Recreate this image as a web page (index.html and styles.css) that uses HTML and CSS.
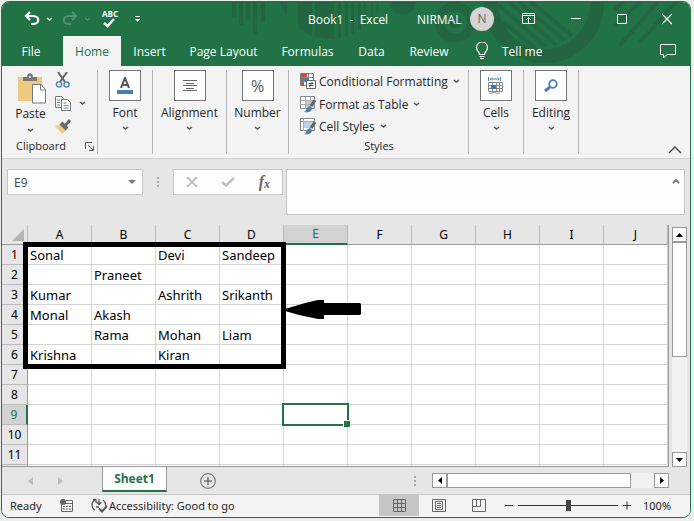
FILE: index.html
```html
<!DOCTYPE html>
<html lang="en">
<head>
<meta charset="utf-8">
<title>Book1 - Excel</title>
<link rel="stylesheet" href="styles.css">
</head>
<body>
<div class="window">
  <header class="top">
    <svg class="pattern" width="689" height="64" viewBox="2 2 689 64" aria-hidden="true">
      <g fill="#236541">
        <path d="M232 2h4v16h-4zM239 2h4v23h-4zM246 2h4v18h-4zM253 2h4v32h-4zM261 2h4v20h-4zM280 2h7v14q-5-7-7-14zM298 2h14v34q-9-4-14-10zM315 2h19v37q-11 0-19-3zM338 2h3v36h-3zM345 2h3v34h-3zM351 2h3v32h-3zM358 2h3v28h-3zM364 2h2v25h-2zM371 2h2v19h-2zM377 2h1v10h-1zM389 2h27q-2 12-13.500 12T389 2z"/>
        <circle cx="455" cy="22" r="6"/>
      </g>
      <g fill="none" stroke="#236541">
        <circle cx="455" cy="22" r="16" stroke-width="9"/>
        <circle cx="544" cy="3" r="53" stroke-width="14"/>
        <path stroke-width="4" d="M503 22l32 26M499 5l47 42M509 2l47 43M519 2l45 38M531 2l41 34M624 2l-10 8M640 2l-25 24M658 2l-38 43M676 2l-36 40"/>
      </g>
    </svg>
    <div class="titlebar">
      <div class="quick">
        <button class="flat undo" aria-label="Undo"><svg width="16" height="16" viewBox="0 0 16 16" fill="none" stroke="#fff" stroke-width="2.200"><path d="M6 1L2 5l4 4M2 5h7c7 0 7 8 0 8H7"/></svg></button>
        <button class="flat mini" aria-label="Undo list"><svg width="7" height="5" viewBox="0 0 7 5" fill="none" stroke="#d5e6dc" stroke-width="1.500"><path d="M1 1l2.500 2L6 1"/></svg></button>
        <button class="flat redo" aria-label="Redo"><svg width="16" height="16" viewBox="0 0 16 16" fill="none" stroke="#4f9070" stroke-width="2.200"><path d="M10 1l4 4-4 4M14 5H7c-7 0-7 8 0 8h2"/></svg></button>
        <button class="flat mini" aria-label="Redo list"><svg width="7" height="5" viewBox="0 0 7 5" fill="none" stroke="#4f9070" stroke-width="1.500"><path d="M1 1l2.500 2L6 1"/></svg></button>
        <button class="flat spell" aria-label="Spelling"><span>ABC</span><svg width="14" height="10" viewBox="0 0 14 10" fill="none" stroke="#fff" stroke-width="2.500"><path d="M2 5l3.500 3L12 1"/></svg></button>
        <button class="flat custom" aria-label="Customize toolbar"><svg width="7" height="7" viewBox="0 0 7 7" fill="#fff"><path d="M1 0h5v1H1zM1 3h5L3.500 6z"/></svg></button>
      </div>
      <h1 class="doc">Book1&nbsp; -&nbsp; Excel</h1>
      <span class="user">NIRMAL</span>
      <span class="avatar">N</span>
      <div class="winbtns">
        <button class="flat" aria-label="Ribbon display"><svg width="14" height="12" viewBox="0 0 14 12" fill="none" stroke="#fff"><path d="M.5.5h12v10H.5zM.5 2.500h12M6.500 10V4.500M4 7l2.500-2.500L9 7"/></svg></button>
        <button class="flat" aria-label="Minimize"><svg width="10" height="12" viewBox="0 0 10 12" stroke="#fff"><path d="M0 5.500h10"/></svg></button>
        <button class="flat" aria-label="Maximize"><svg width="10" height="12" viewBox="0 0 10 12" fill="none" stroke="#fff"><path d="M.5 1.500h9v9h-9z"/></svg></button>
        <button class="flat" aria-label="Close"><svg width="10" height="12" viewBox="0 0 10 12" fill="none" stroke="#fff" stroke-width="1.200"><path d="M0 1l10 10M10 1L0 11"/></svg></button>
      </div>
    </div>
    <nav class="tabs">
      <button class="tab file">File</button>
      <button class="tab home">Home</button>
      <button class="tab insert">Insert</button>
      <button class="tab layout">Page Layout</button>
      <button class="tab formulas">Formulas</button>
      <button class="tab data">Data</button>
      <button class="tab review">Review</button>
      <button class="tab tell"><svg width="12" height="18" viewBox="0 0 12 18" fill="none" stroke="#fff" stroke-width="1.200"><path d="M3.500 12.500c0-3-3-3.500-3-7a5 5 0 0 1 11 0c0 3.500-3 4-3 7zM3.500 14.500h5M4 16.500h4"/></svg>Tell me</button>
      <button class="flat comment" aria-label="Comments"><svg width="16" height="16" viewBox="0 0 16 16" fill="none" stroke="#fff"><path d="M.5 1.500h15v10H7L3.500 15v-3.500h-3z"/></svg></button>
    </nav>
  </header>

  <section class="ribbon">
    <div class="group clipboard">
      <div class="cliprow">
        <button class="flat paste">
          <svg width="28" height="31" viewBox="0 0 28 31"><path d="M0 4h24v24H0z" fill="#eec980"/><path d="M5 4h4c0-5 6-5 6 0h4v4H5z" fill="#777"/><circle cx="12" cy="4" r="1" fill="#eee"/><path d="M14.500 11.500h8.500l4.500 5v13.500h-13z" fill="#fff" stroke="#777"/><path d="M22.500 12v5H28" fill="none" stroke="#777"/></svg>
          <span>Paste</span>
          <svg class="chev" width="7" height="5" viewBox="0 0 7 5"><path d="M1 1l2.500 2L6 1"/></svg>
        </button>
        <div class="clips">
          <button class="flat" aria-label="Cut"><svg width="16" height="16" viewBox="0 0 16 16" fill="none"><path d="M3 0l7 10M12 0L5 10" stroke="#666" stroke-width="2"/><circle cx="4" cy="12.500" r="2.600" stroke="#4a86c4" stroke-width="1.400"/><circle cx="11.500" cy="12.500" r="2.600" stroke="#4a86c4" stroke-width="1.400"/></svg></button>
          <button class="flat copy" aria-label="Copy"><svg width="16" height="15" viewBox="0 0 16 15" fill="#fff" stroke="#777"><path d="M.5.5h6l2 2v9h-8z"/><path d="M6.500 3.500h6l3 3v8h-9z"/><path d="M2 4h3M2 6.500h3M2 9h3M8.500 7h3M8.500 9.500h5M8.500 12h5" stroke="#4a7fb5"/></svg><svg class="chev" width="7" height="5" viewBox="0 0 7 5"><path d="M1 1l2.500 2L6 1"/></svg></button>
          <button class="flat" aria-label="Format painter"><svg width="17" height="15" viewBox="0 0 17 15"><path d="M0 7l6-2 6 5-5 5z" fill="#eec980"/><path d="M6 4l6 6" stroke="#6a6a6a" stroke-width="4"/><path d="M9.500 7l4-4" stroke="#6a6a6a" stroke-width="3"/><path d="M12 2l2-2 2 2-2 3z" fill="#666"/></svg></button>
        </div>
      </div>
      <div class="caption">Clipboard<svg width="9" height="9" viewBox="0 0 9 9" fill="none" stroke="#555"><path d="M.5 7V.5H7M3 3l5 5M8.500 4v4.500H4"/></svg></div>
    </div>
    <div class="group font">
      <button class="flat big"><span class="tile"><svg width="18" height="18" viewBox="0 0 18 18"><path d="M5 11L9 1l4 10M6.500 8h5" fill="none" stroke="#555" stroke-width="2"/><path d="M1 13h16v4H1z" fill="#4a7fb5"/></svg></span><span>Font</span><svg class="chev" width="7" height="5" viewBox="0 0 7 5"><path d="M1 1l2.500 2L6 1"/></svg></button>
    </div>
    <div class="group align">
      <button class="flat big"><span class="tile"><svg width="14" height="13" viewBox="0 0 14 13" stroke="#666"><path d="M0 1.500h14M3 4.500h8M0 6.500h14M3 9.500h8M0 11.500h14"/></svg></span><span>Alignment</span><svg class="chev" width="7" height="5" viewBox="0 0 7 5"><path d="M1 1l2.500 2L6 1"/></svg></button>
    </div>
    <div class="group number">
      <button class="flat big"><span class="tile percent">%</span><span>Number</span><svg class="chev" width="7" height="5" viewBox="0 0 7 5"><path d="M1 1l2.500 2L6 1"/></svg></button>
    </div>
    <div class="group styles">
      <button class="flat line"><svg width="16" height="17" viewBox="0 0 16 17"><path d="M.5.5h13v12H.5z" fill="#fff" stroke="#777"/><path d="M1 1h6v3H1zM1 9h3v3H1z" fill="#d0532f"/><path d="M1 5h8v3H1z" fill="#4a7fb5"/><path d="M1 4.500h12M1 8.500h6M8.500 1v4" stroke="#888"/><path d="M6.500 7.500h9v8h-9z" fill="#fff" stroke="#666"/><path d="M8.500 10.500h5M8.500 12.500h5M12.500 9l-3 5" stroke="#555"/></svg>Conditional Formatting<svg class="chev" width="7" height="5" viewBox="0 0 7 5"><path d="M1 1l2.500 2L6 1"/></svg></button>
      <button class="flat line"><svg width="16" height="17" viewBox="0 0 16 17"><path d="M.5.5h14v12H.5z" fill="#fff" stroke="#888"/><path d="M5 4h9v8H5z" fill="#bcd0e6"/><path d="M1 4.500h13M1 8.500h13M5.500 1v12M10.500 1v12" stroke="#aaa"/><path d="M15 4l-4 6" stroke="#666" stroke-width="3"/><path d="M4 16c3-1 2-5 6-6l2 2c0 4-4 5-8 4z" fill="#4a7fb5"/></svg>Format as Table<svg class="chev" width="7" height="5" viewBox="0 0 7 5"><path d="M1 1l2.500 2L6 1"/></svg></button>
      <button class="flat line"><svg width="16" height="17" viewBox="0 0 16 17"><path d="M.5.5h14v12H.5z" fill="#fff" stroke="#888"/><path d="M4 4h9v6H4z" fill="#bcd0e6"/><path d="M1 3.500h13M3.500 1v12" stroke="#aaa"/><path d="M15 4l-4 6" stroke="#666" stroke-width="3"/><path d="M4 16c3-1 2-5 6-6l2 2c0 4-4 5-8 4z" fill="#4a7fb5"/></svg>Cell Styles<svg class="chev" width="7" height="5" viewBox="0 0 7 5"><path d="M1 1l2.500 2L6 1"/></svg></button>
      <div class="caption">Styles</div>
    </div>
    <div class="group cells">
      <button class="flat big"><span class="tile"><svg width="16" height="17" viewBox="0 0 16 17" fill="none"><path d="M.5 0v4M12.500 0v4M2 2h9M4 .5L2.500 2 4 3.500M9.500.5L11 2 9.500 3.500" stroke="#4a7fb5"/><path d="M.5 5.500h14v9H.5zM.5 8.500h14M.5 11.500h14M4.500 5.500v9M8.500 5.500v9M11.500 5.500v9" stroke="#888"/><path d="M3 8h5v4H3z" fill="#3778bd"/><path d="M1 16q3 1 5-1 2 2 6 1" stroke="#888"/></svg></span><span>Cells</span><svg class="chev" width="7" height="5" viewBox="0 0 7 5"><path d="M1 1l2.500 2L6 1"/></svg></button>
    </div>
    <div class="group editing">
      <button class="flat big"><span class="tile"><svg width="14" height="14" viewBox="0 0 14 14" fill="none" stroke="#4a7fb5"><circle cx="9" cy="5" r="3.800" stroke-width="1.800"/><path d="M6 8l-5 4" stroke-width="3"/></svg></span><span>Editing</span><svg class="chev" width="7" height="5" viewBox="0 0 7 5"><path d="M1 1l2.500 2L6 1"/></svg></button>
    </div>
    <button class="flat collapse" aria-label="Collapse ribbon"><svg width="14" height="8" viewBox="0 0 14 8" fill="none" stroke="#444" stroke-width="1.400"><path d="M1 7l6-6 6 6"/></svg></button>
  </section>

  <section class="formula">
    <div class="namebox"><input type="text" value="E9" aria-label="Name box"><button class="flat" aria-label="Name list"><svg width="8" height="4" viewBox="0 0 8 4"><path d="M0 0h8L4 4z" fill="#777"/></svg></button></div>
    <span class="dots"></span>
    <div class="fxbox">
      <button class="flat" aria-label="Cancel"><svg width="12" height="10" viewBox="0 0 12 10" fill="none" stroke="#c1c1c1" stroke-width="2"><path d="M1 0l10 10M11 0L1 10"/></svg></button>
      <button class="flat" aria-label="Enter"><svg width="14" height="10" viewBox="0 0 14 10" fill="none" stroke="#c1c1c1" stroke-width="2.500"><path d="M1 5l4 3.500L13 1"/></svg></button>
      <button class="flat fx" aria-label="Insert function">f<small>x</small></button>
    </div>
    <div class="fbar"><textarea aria-label="Formula bar"></textarea><button class="flat" aria-label="Collapse formula bar"><svg width="8" height="6" viewBox="0 0 8 6" fill="none" stroke="#777" stroke-width="2"><path d="M1 5l3-3 3 3"/></svg></button></div>
  </section>

  <section class="workspace">
    <div class="gridarea">
      <table class="sheet">
        <thead><tr><th class="corner"><svg width="12" height="12" viewBox="0 0 12 12"><path d="M12 0v12H0z" fill="#b4b4b4"/></svg></th><th>A</th><th>B</th><th>C</th><th>D</th><th class="on">E</th><th>F</th><th>G</th><th>H</th><th>I</th><th>J</th></tr></thead>
        <tbody>
          <tr><th>1</th><td>Sonal</td><td></td><td>Devi</td><td>Sandeep</td><td></td><td></td><td></td><td></td><td></td><td></td></tr>
          <tr><th>2</th><td></td><td>Praneet</td><td></td><td></td><td></td><td></td><td></td><td></td><td></td><td></td></tr>
          <tr><th>3</th><td>Kumar</td><td></td><td>Ashrith</td><td>Srikanth</td><td></td><td></td><td></td><td></td><td></td><td></td></tr>
          <tr><th>4</th><td>Monal</td><td>Akash</td><td></td><td></td><td></td><td></td><td></td><td></td><td></td><td></td></tr>
          <tr><th>5</th><td></td><td>Rama</td><td>Mohan</td><td>Liam</td><td></td><td></td><td></td><td></td><td></td><td></td></tr>
          <tr><th>6</th><td>Krishna</td><td></td><td>Kiran</td><td></td><td></td><td></td><td></td><td></td><td></td><td></td></tr>
          <tr><th>7</th><td></td><td></td><td></td><td></td><td></td><td></td><td></td><td></td><td></td><td></td></tr>
          <tr><th>8</th><td></td><td></td><td></td><td></td><td></td><td></td><td></td><td></td><td></td><td></td></tr>
          <tr><th class="on">9</th><td></td><td></td><td></td><td></td><td class="selected"><span class="marker"></span></td><td></td><td></td><td></td><td></td><td></td></tr>
          <tr><th>10</th><td></td><td></td><td></td><td></td><td></td><td></td><td></td><td></td><td></td><td></td></tr>
          <tr><th>11</th><td></td><td></td><td></td><td></td><td></td><td></td><td></td><td></td><td></td><td></td></tr>
          <tr><th></th><td></td><td></td><td></td><td></td><td></td><td></td><td></td><td></td><td></td><td></td></tr>
        </tbody>
      </table>
      <div class="frame"></div>
      <svg class="arrow" width="77" height="20" viewBox="0 0 77 20"><path d="M0 9L20 3 33 0h6v3h36l1 1v10l-1 1H39v4h-6L14 15 0 11z"/></svg>
    </div>
    <div class="vscroll">
      <button aria-label="Scroll up"><svg width="7" height="4" viewBox="0 0 7 4"><path d="M0 4h7L3.500 0z"/></svg></button>
      <div class="thumb"></div>
      <div class="track"></div>
      <button aria-label="Scroll down"><svg width="7" height="4" viewBox="0 0 7 4"><path d="M0 0h7L3.500 4z"/></svg></button>
    </div>
  </section>

  <section class="sheets">
    <div class="sheetnav">
      <button class="flat" aria-label="Previous sheet"><svg width="5" height="8" viewBox="0 0 5 8"><path d="M5 0v8L0 4z" fill="#bbb"/></svg></button>
      <button class="flat" aria-label="Next sheet"><svg width="5" height="8" viewBox="0 0 5 8"><path d="M0 0v8l5-4z" fill="#bbb"/></svg></button>
    </div>
    <button class="sheettab">Sheet1</button>
    <button class="flat addsheet" aria-label="New sheet"><svg width="16" height="16" viewBox="0 0 16 16" fill="none" stroke="#777"><circle cx="8" cy="8" r="7.300" stroke-width="1.200"/><path d="M8 4v8M4 8h8" stroke-width="1.600"/></svg></button>
    <span class="dots"></span>
    <div class="hscroll">
      <button aria-label="Scroll left"><svg width="4" height="7" viewBox="0 0 4 7"><path d="M4 0v7L0 3.500z"/></svg></button>
      <div class="thumb"></div>
      <div class="track"></div>
      <button aria-label="Scroll right"><svg width="4" height="7" viewBox="0 0 4 7"><path d="M0 0v7l4-3.500z"/></svg></button>
    </div>
  </section>

  <footer class="status">
    <span class="ready">Ready</span>
    <button class="flat macro" aria-label="Record macro"><svg width="13" height="13" viewBox="0 0 13 13"><path d="M1.500 4v8.500h11v-11H6M5 4.500h7M3 7.500h2M6 7.500h2M9 7.500h2M3 10h2M6 10h2M9 10h2" fill="none" stroke="#666"/><circle cx="3" cy="3" r="3" fill="#666"/></svg></button>
    <button class="flat access"><svg width="17" height="15" viewBox="0 0 17 15" fill="none" stroke="#555" stroke-width="1.300"><path d="M4 2C0 4 0 10 4 12M2 1.500h3v3M8 1v6M5.500 4L8 6.500 10.500 4M8 9H5M12 2q3 2 2.500 6"/><path d="M8 10.500l3 3 5-5.500" stroke-width="2"/></svg>Accessibility: Good to go</button>
    <div class="views">
      <button class="flat current" aria-label="Normal"><svg width="13" height="13" viewBox="0 0 13 13" fill="none" stroke="#666"><path d="M.5.5h12v12H.5zM.5 4.500h12M.5 8.500h12M4.500.5v12M8.500.5v12"/></svg></button>
      <button class="flat" aria-label="Page layout"><svg width="14" height="13" viewBox="0 0 14 13" fill="none" stroke="#666"><path d="M.5.5h13v12H.5zM3.500 2.500h7v8h-7zM5 4.500h4M5 6.500h4M5 8.500h4"/></svg></button>
      <button class="flat" aria-label="Page break"><svg width="14" height="13" viewBox="0 0 14 13" fill="none" stroke="#666"><path d="M.5.5h13v12H.5zM4.500.5v7M8.500.5v7M.5 7.500h8"/></svg></button>
    </div>
    <button class="flat" aria-label="Zoom out"><svg width="8" height="9" viewBox="0 0 8 9" stroke="#333"><path d="M0 4.500h8"/></svg></button>
    <input class="zoom" type="range" min="0" max="100" value="50" aria-label="Zoom">
    <button class="flat" aria-label="Zoom in"><svg width="8" height="9" viewBox="0 0 8 9" stroke="#333"><path d="M0 4.500h8M4 .5v8"/></svg></button>
    <span class="percentage">100%</span>
  </footer>
</div>
</body>
</html>
```
FILE: styles.css
```css
* { box-sizing: border-box; }
body {
  margin: 0;
  padding: 1px 3px 3px 1px;
  background: #ededed;
  font-family: "Open Sans", "Noto Sans", sans-serif;
  font-size: 12px;
  color: #262626;
}
svg { display: block; flex: none; }
button, input, textarea { font: inherit; color: inherit; }
.window {
  border: 1px solid #217346;
  border-radius: 8px;
  overflow: hidden;
  background: #e6e6e6;
}
.flat { border: 0; background: none; padding: 0; display: flex; align-items: center; }
.chev { fill: none; stroke: #555; stroke-width: 1.5; }

/* Title bar and tabs */
.top { position: relative; background: #217346; color: #fff; }
.pattern { position: absolute; left: 0; top: 0; }
.titlebar { position: relative; display: flex; align-items: center; height: 34px; }
.quick { display: flex; align-items: center; flex: 0 0 306px; padding-left: 22px; }
.undo, .redo { width: 22px; }
.mini { width: 16px; }
.spell { width: 32px; margin-left: 2px; flex-direction: column; align-items: flex-start; }
.spell span { font-size: 8px; line-height: 8px; font-weight: 700; }
.doc { margin: 0; font-size: 12px; font-weight: 400; flex: 0 0 109px; white-space: nowrap; }
.user { flex: 0 0 53px; }
.avatar { width: 24px; height: 24px; border-radius: 50%; background: #d4d4d4; color: #666; text-align: center; line-height: 24px; }
.winbtns { display: flex; flex: 1; justify-content: space-between; padding: 0 18px 0 28px; }
.tabs { position: relative; display: flex; height: 30px; }
.tab { border: 0; background: none; padding: 0; display: flex; align-items: center; justify-content: center; white-space: nowrap; }
.file { width: 61px; padding-right: 3px; }
.home { width: 58px; background: #f3f3f3; color: #217346; }
.insert { width: 57px; }
.layout { width: 91px; }
.formulas { width: 77px; }
.data { width: 51px; }
.review { width: 64px; }
.tell { gap: 14px; padding-left: 15px; }
.comment { margin: 0 14px 0 auto; }

/* Ribbon */
.ribbon { display: flex; height: 93px; padding: 4px 0; background: #f3f3f3; border-bottom: 1px solid #d2d2d2; }
.group { display: flex; flex-direction: column; border-right: 1px solid #b4b4b4; flex: none; white-space: nowrap; }
.clipboard { width: 96px; }
.font, .cells, .editing { width: 55px; }
.align { width: 74px; }
.number { width: 62px; }
.styles { width: 180px; padding-left: 11px; }
.cliprow { display: flex; height: 66px; }
.paste { flex-direction: column; width: 53px; margin-left: 2px; padding-top: 3px; }
.paste span { line-height: 20px; margin-bottom: 4px; }
.paste svg:first-child { margin-left: 3px; }
.clips { display: flex; flex-direction: column; justify-content: space-between; padding: 2px 0; margin-left: -2px; }
.copy { gap: 8px; }
.caption { display: flex; font-size: 11px; line-height: 16px; margin-top: auto; justify-content: center; align-items: center; }
.clipboard .caption { justify-content: space-between; padding: 0 3px 0 14px; }
.styles .caption { padding-right: 10px; }
.big { flex-direction: column; }
.big > span:nth-child(2) { line-height: 24px; margin-bottom: 1px; }
.tile { width: 32px; height: 31px; border: 1px solid #777; background: #fff; display: flex; align-items: center; justify-content: center; }
.percent { font-size: 16px; color: #555; }
.line { height: 23px; gap: 3px; }
.line .chev { margin-left: 2px; }
.collapse { margin: auto 8px 0 auto; }

/* Formula row */
.formula { display: flex; align-items: flex-start; height: 66px; padding: 10px 5px 0; }
.namebox, .fxbox, .fbar { display: flex; background: #fdfdfd; border: 1px solid #c6c6c6; }
.namebox { width: 136px; height: 26px; padding-right: 6px; }
.namebox input { flex: 1; min-width: 0; border: 0; background: none; padding: 0 6px; color: #444; }
.dots { width: 2px; height: 10px; background: repeating-linear-gradient(#aaa 0 2px, transparent 2px 4px); }
.formula .dots { margin: 8px 14px 0 14px; }
.fxbox { width: 110px; height: 26px; justify-content: space-between; padding: 0 12px; }
.fx { font: italic 700 16px "Liberation Serif", serif; color: #666; }
.fx small { font-size: 12px; padding-top: 4px; }
.fbar { flex: 1; height: 46px; margin-left: 3px; padding-right: 4px; align-items: flex-start; }
.fbar textarea { flex: 1; align-self: stretch; border: 0; resize: none; background: none; }
.fbar button { margin-top: 8px; }

/* Worksheet grid */
.workspace { display: flex; height: 242px; }
.gridarea { position: relative; flex: 1; overflow: hidden; border-right: 1px solid #999; border-bottom: 1px solid #999; background: #fff; }
.sheet { table-layout: fixed; width: 666px; border-collapse: separate; border-spacing: 0; font-family: "Noto Sans", "Open Sans", sans-serif; font-size: 13px; color: #000; }
.sheet th, .sheet td { height: 20px; padding: 1px 2px 0; line-height: 18px; font-weight: 400; white-space: nowrap; border-right: 1px solid #d4d4d4; border-bottom: 1px solid #d4d4d4; }
.sheet th { background: #e6e6e6; text-align: center; font-size: 12px; }
.sheet thead th { width: 64px; padding-top: 0; border-right-color: #b8b8b8; border-bottom-color: #999; }
.sheet thead .corner { width: 26px; padding: 0 3px 0 10px; }
.sheet tbody th { border-right-color: #999; border-bottom-color: #bbb; }
.sheet .on { background: #d2d2d2; color: #217346; }
.sheet thead .on { border-bottom: 2px solid #217346; }
.sheet tbody .on { border-right: 2px solid #217346; }
.selected { position: relative; }
.marker { position: absolute; inset: -2px; border: 2px solid #217346; }
.marker::after { content: ""; position: absolute; right: -3px; bottom: -3px; width: 6px; height: 6px; background: #217346; border: solid #fff; border-width: 1px 0 0 1px; }
.frame { position: absolute; left: 21px; top: 17px; width: 263px; height: 127px; border: 5px solid #000; }
.arrow { position: absolute; left: 283px; top: 75px; }
.vscroll { width: 15px; margin: 2px 3px 0; display: flex; flex-direction: column; }
.vscroll button, .hscroll button { width: 15px; height: 15px; flex: none; border: 1px solid #999; background: #fff; padding: 0; display: flex; align-items: center; justify-content: center; }
.thumb { border: 1px solid #999; background: #fff; }
.track { flex: 1; background: #f2f2f2; }
.vscroll .thumb { height: 115px; }

/* Sheet tabs */
.sheets { display: flex; align-items: center; height: 27px; padding-right: 21px; }
.sheetnav { display: flex; width: 100px; gap: 25px; padding-left: 26px; }
.sheettab { width: 65px; height: 25px; align-self: flex-start; background: #fff; border: solid #999; border-width: 0 1px; border-bottom: 2px solid #217346; padding: 0; color: #217346; font-weight: 700; }
.addsheet { margin-left: 33px; }
.sheets .dots { margin: 0 16px 0 auto; }
.hscroll { display: flex; width: 237px; }
.hscroll .thumb { width: 184px; }

/* Status bar */
.status { display: flex; align-items: center; height: 23px; padding-bottom: 1px; background: #f3f3f3; border-top: 1px solid #c6c6c6; font-family: "Noto Sans", "Open Sans", sans-serif; font-size: 11px; white-space: nowrap; }
.ready { width: 58px; padding-left: 8px; }
.macro { width: 31px; }
.access { gap: 1px; }
.views { display: flex; align-self: stretch; margin: 0 6px 0 auto; }
.views button { width: 40px; justify-content: center; }
.views .current { background: #c6c6c6; }
.zoom { appearance: none; width: 100px; height: 12px; margin: 0 5px; background: linear-gradient(#333, #333) center / 100% 1px no-repeat; }
.zoom::-webkit-slider-thumb { appearance: none; width: 5px; height: 11px; background: #444; }
.percentage { width: 59px; padding-left: 12px; }
```
